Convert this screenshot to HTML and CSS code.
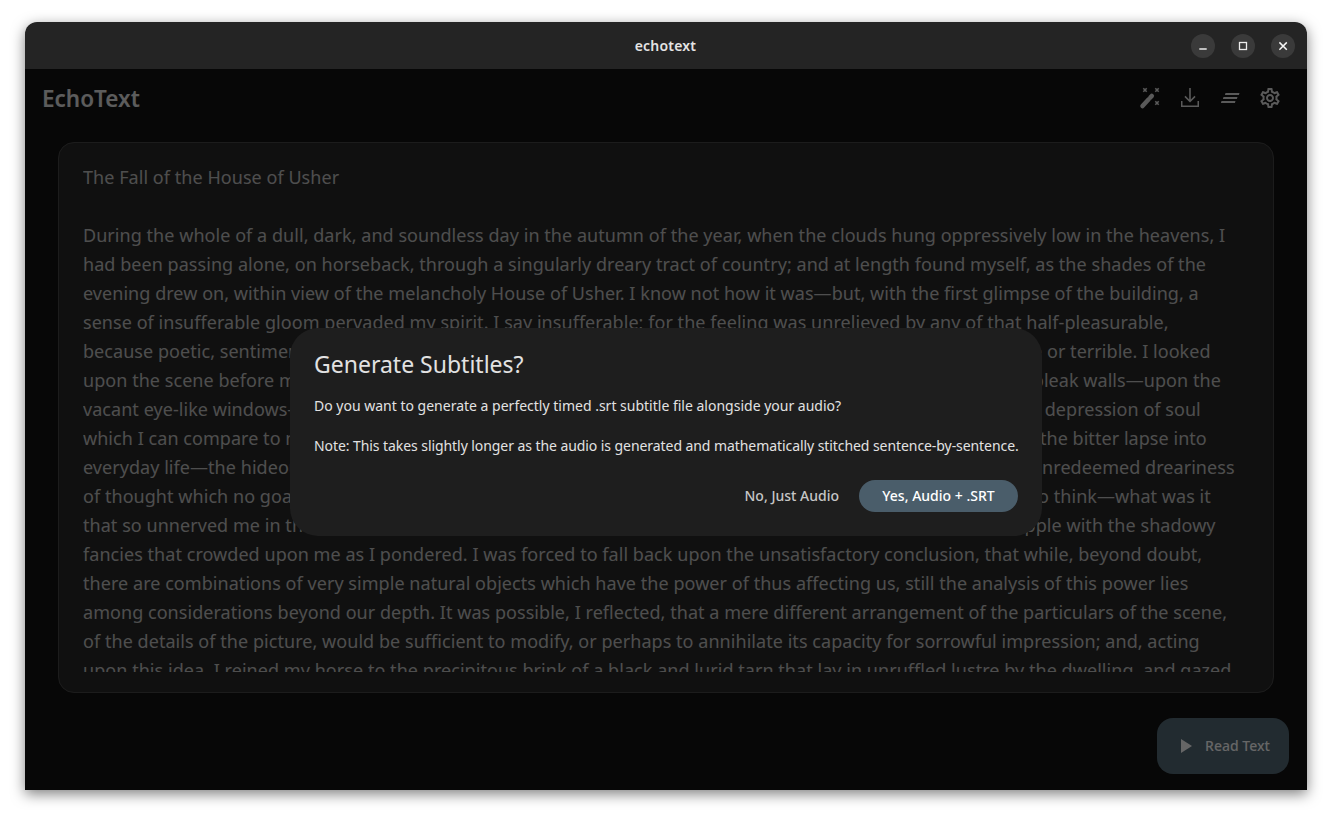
FILE: index.html
```html
<!DOCTYPE html>
<html lang="en">
<head>
    <meta charset="UTF-8">
    <meta name="viewport" content="width=device-width, initial-scale=1.0">
    <title>echotext</title>
    <link rel="stylesheet" href="styles.css">
</head>
<body>
    <div class="window">
        <div class="titlebar">
            <span class="titlebar-name">echotext</span>
            <div class="window-controls">
                <button class="win-btn" aria-label="Minimize">
                    <svg width="10" height="10" viewBox="0 0 10 10"><path d="M1.300 8h7.400" stroke="#ececec" stroke-width="1.300" fill="none"/></svg>
                </button>
                <button class="win-btn" aria-label="Maximize">
                    <svg width="10" height="10" viewBox="0 0 10 10"><rect x="1.500" y="1.500" width="7" height="7" stroke="#ececec" stroke-width="1.300" fill="none"/></svg>
                </button>
                <button class="win-btn" aria-label="Close">
                    <svg width="10" height="10" viewBox="0 0 10 10"><path d="M1.400 1.400l7.400 7.400M8.800 1.400l-7.400 7.400" stroke="#f4f4f4" stroke-width="1.500" fill="none"/></svg>
                </button>
            </div>
        </div>

        <div class="app">
            <header class="app-header">
                <h1>EchoText</h1>
                <div class="actions">
                    <button class="icon-btn" aria-label="Clean up text">
                        <svg width="24" height="24" viewBox="0 0 24 24">
                            <path class="stroke wand" d="M4.500 20l6.200-6.700M12.300 11.600l1.500-1.700"/>
                            <path class="stroke" d="M5.300 2.300l3.400 3.400M8.700 2.300l-3.400 3.400M17.300 2.300l3.400 3.400M20.700 2.300l-3.400 3.400M17.300 15.300l3.400 3.400M20.700 15.300l-3.400 3.400"/>
                        </svg>
                    </button>
                    <button class="icon-btn" aria-label="Download audio">
                        <svg width="24" height="24" viewBox="0 0 24 24"><path d="M19.500 15v4.500h-15V15H3v6h18v-6z"/><path d="M12.800 2h-1.600v11.500L7.500 9.800 6.400 11l5.600 5.600 5.600-5.600-1.100-1.200-3.700 3.700z"/></svg>
                    </button>
                    <button class="icon-btn" aria-label="Subtitles">
                        <svg width="24" height="24" viewBox="0 0 24 24"><path d="M7.500 7h14l-.6 2H6.900z M5.500 11h14l-.6 2H4.900z M3.500 15h14l-.6 2H2.900z"/></svg>
                    </button>
                    <button class="icon-btn" aria-label="Settings">
                        <svg width="24" height="24" viewBox="0 0 24 24"><path d="M19.430 12.980c.04-.32.07-.64.07-.98s-.03-.66-.07-.98l2.110-1.650c.19-.15.24-.42.12-.64l-2-3.460c-.12-.22-.39-.3-.61-.22l-2.490 1c-.52-.4-1.080-.73-1.690-.98l-.38-2.650A.488.488 0 0 0 14 2h-4c-.25 0-.46.18-.49.42l-.38 2.650c-.61.25-1.170.59-1.690.98l-2.490-1c-.23-.09-.49 0-.61.22l-2 3.460c-.13.22-.07.49.12.64l2.110 1.650c-.04.32-.07.65-.07.98s.03.66.07.98l-2.110 1.650c-.19.15-.24.42-.12.64l2 3.460c.12.22.39.3.61.22l2.490-1c.52.4 1.080.73 1.690.98l.38 2.650c.03.24.24.42.49.42h4c.25 0 .46-.18.49-.42l.38-2.650c.61-.25 1.170-.59 1.690-.98l2.490 1c.23.09.49 0 .61-.22l2-3.460c.12-.22.07-.49-.12-.64l-2.110-1.650zM17.450 11.270c.04.31.05.52.05.73s-.02.43-.05.73l-.14 1.130.89.7 1.080.84-.7 1.210-1.270-.51-1.040-.42-.9.68c-.43.32-.84.56-1.250.73l-1.060.43-.16 1.130-.2 1.350h-1.400l-.19-1.350-.16-1.130-1.060-.43c-.43-.18-.83-.41-1.230-.71l-.91-.7-1.060.43-1.270.51-.7-1.210 1.080-.84.89-.7-.14-1.130c-.03-.31-.05-.54-.05-.74s.02-.43.05-.73l.14-1.130-.89-.7-1.080-.84.7-1.210 1.270.51 1.040.42.9-.68c.43-.32.84-.56 1.250-.73l1.060-.43.16-1.130.2-1.350h1.390l.19 1.350.16 1.130 1.060.43c.43.18.83.41 1.230.71l.91.7 1.060-.43 1.270-.51.7 1.210-1.070.85-.89.7.14 1.130zM12 8c-2.210 0-4 1.790-4 4s1.790 4 4 4 4-1.790 4-4-1.790-4-4-4zm0 6c-1.100 0-2-.9-2-2s.9-2 2-2 2 .9 2 2-.9 2-2 2z"/></svg>
                    </button>
                </div>
            </header>

            <div class="text-card">
                <div class="text-body">
                    <p class="story-title">The Fall of the House of Usher</p>
                    <p class="story-text">During the whole of a dull, dark, and soundless day in the autumn of the year, when the clouds hung oppressively low in the heavens, I<br>
                    had been passing alone, on horseback, through a singularly dreary tract of country; and at length found myself, as the shades of the<br>
                    evening drew on, within view of the melancholy House of Usher. I know not how it was—but, with the first glimpse of the building, a<br>
                    sense of insufferable gloom pervaded my spirit. I say insufferable; for the feeling was unrelieved by any of that half-pleasurable,<br>
                    because poetic, sentiment, with which the mind usually receives even the sternest natural images of the desolate or terrible. I looked<br>
                    upon the scene before me—upon the mere house, and the simple landscape features of the domain—upon the bleak walls—upon the<br>
                    vacant eye-like windows—upon a few rank sedges—and upon a few white trunks of decayed trees—with an utter depression of soul<br>
                    which I can compare to no earthly sensation more properly than to the after-dream of the reveller upon opium—the bitter lapse into<br>
                    everyday life—the hideous dropping off of the veil. There was an iciness, a sinking, a sickening of the heart—an unredeemed dreariness<br>
                    of thought which no goading of the imagination could torture into aught of the sublime. What was it—I paused to think—what was it<br>
                    that so unnerved me in the contemplation of the House of Usher? It was a mystery all insoluble; nor could I grapple with the shadowy<br>
                    fancies that crowded upon me as I pondered. I was forced to fall back upon the unsatisfactory conclusion, that while, beyond doubt,<br>
                    there are combinations of very simple natural objects which have the power of thus affecting us, still the analysis of this power lies<br>
                    among considerations beyond our depth. It was possible, I reflected, that a mere different arrangement of the particulars of the scene,<br>
                    of the details of the picture, would be sufficient to modify, or perhaps to annihilate its capacity for sorrowful impression; and, acting<br>
                    upon this idea, I reined my horse to the precipitous brink of a black and lurid tarn that lay in unruffled lustre by the dwelling, and gazed</p>
                </div>
            </div>

            <div class="app-footer">
                <button class="read-btn">
                    <svg width="24" height="24" viewBox="0 0 24 24"><path d="M7 5v14l11-7z"/></svg>
                    <span>Read Text</span>
                </button>
            </div>

            <div class="scrim">
                <div class="dialog">
                    <h2>Generate Subtitles?</h2>
                    <p>Do you want to generate a perfectly timed .srt subtitle file alongside your audio?</p>
                    <p class="dialog-note">Note: This takes slightly longer as the audio is generated and mathematically stitched sentence-by-sentence.</p>
                    <div class="dialog-actions">
                        <button class="btn-text">No, Just Audio</button>
                        <button class="btn-filled">Yes, Audio + .SRT</button>
                    </div>
                </div>
            </div>
        </div>
    </div>
</body>
</html>
```

FILE: styles.css
```css
html, body {
    height: 100%;
}

body {
    margin: 0;
    padding: 22px 25px 28px 25px;
    box-sizing: border-box;
    background: #ffffff;
    font-family: 'Noto Sans', 'Open Sans', sans-serif;
    overflow: hidden;
}

button {
    font-family: inherit;
    border: none;
    background: none;
    cursor: pointer;
    padding: 0;
}

/* Window frame */
.window {
    height: 768px;
    display: flex;
    flex-direction: column;
    border-radius: 12px 12px 0 0;
    overflow: hidden;
    box-shadow: 0 4px 14px rgba(0, 0, 0, 0.5);
}

.titlebar {
    position: relative;
    flex: none;
    height: 47px;
    background: #242424;
    display: flex;
    align-items: center;
    justify-content: center;
}

.titlebar-name {
    color: #e4e4e4;
    font-size: 14px;
    font-weight: 600;
    letter-spacing: 0.2px;
    margin-right: 1px;
}

.window-controls {
    position: absolute;
    right: 12px;
    top: 12px;
    display: flex;
    gap: 16px;
}

.win-btn {
    width: 24px;
    height: 24px;
    border-radius: 50%;
    background: #3a3a3a;
    display: flex;
    align-items: center;
    justify-content: center;
}

/* App content */
.app {
    position: relative;
    flex: 1;
    display: flex;
    flex-direction: column;
    background: #121212;
    min-height: 0;
}

.app-header {
    flex: none;
    height: 56px;
    padding: 0 17px 0 17px;
    display: flex;
    align-items: center;
    justify-content: space-between;
}

.app-header h1 {
    margin: 0;
    padding-top: 2px;
    color: #e6e6e6;
    font-size: 22.5px;
    font-weight: 600;
}

.actions {
    display: flex;
    padding-top: 2px;
}

.icon-btn {
    width: 40px;
    height: 40px;
    display: flex;
    align-items: center;
    justify-content: center;
}

.icon-btn svg {
    fill: #e0e0e0;
}

.icon-btn .stroke {
    stroke: #e0e0e0;
    stroke-width: 1.6;
    fill: none;
}

.icon-btn .wand {
    stroke-width: 4.5;
    stroke-linecap: round;
}

.text-card {
    flex: none;
    height: 551px;
    box-sizing: border-box;
    margin: 17px 33px 0 33px;
    border: 1px solid #484848;
    border-radius: 16px;
    background: #2a2a2a;
    padding: 20px 24px;
    overflow: hidden;
}

.text-body {
    height: 100%;
    overflow: hidden;
    color: #c4c4c4;
    font-size: 18px;
    letter-spacing: 0.05px;
    line-height: 29px;
    white-space: nowrap;
}

.text-body p {
    margin: 0;
}

.story-title {
    padding-bottom: 29px;
}

.app-footer {
    flex: 1;
    display: flex;
    justify-content: flex-end;
    padding: 25px 18px 0 0;
}

.read-btn {
    width: 132px;
    height: 56px;
    padding: 0 2px 1px 0;
    border-radius: 16px;
    background: #556b78;
    color: #ffffff;
    font-size: 14px;
    font-weight: 500;
    display: flex;
    align-items: center;
    justify-content: center;
    gap: 7px;
}

.read-btn svg {
    fill: #ffffff;
}

/* Modal */
.scrim {
    position: absolute;
    inset: 0;
    background: rgba(0, 0, 0, 0.6);
    display: flex;
    justify-content: center;
    padding-top: 259px;
}

.dialog {
    box-sizing: border-box;
    width: 752px;
    height: 208px;
    padding: 20px 24px;
    border-radius: 28px;
    background: #1e1e1e;
    color: #e2e2e2;
}

.dialog h2 {
    margin: 0 0 16px;
    font-size: 23px;
    font-weight: 400;
    line-height: 32px;
}

.dialog p {
    margin: 0 0 20px;
    font-size: 14px;
    line-height: 20px;
    white-space: nowrap;
}

.dialog .dialog-note {
    margin-bottom: 24px;
    letter-spacing: -0.07px;
}

.dialog-actions {
    display: flex;
    justify-content: flex-end;
    align-items: center;
    gap: 20px;
}

.btn-text {
    color: #c6c6c6;
    font-size: 14px;
    font-weight: 500;
    padding-bottom: 2px;
}

.btn-filled {
    width: 159px;
    height: 32px;
    padding-bottom: 2px;
    border-radius: 16px;
    background: #4a5d6a;
    color: #ffffff;
    font-size: 14px;
    font-weight: 500;
}
```
